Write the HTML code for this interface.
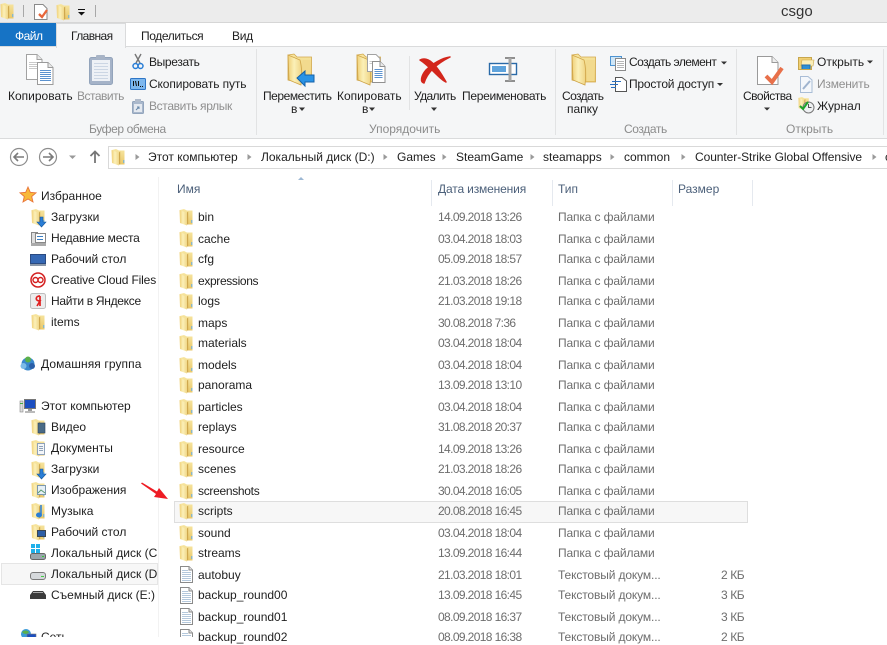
<!DOCTYPE html>
<html><head><meta charset="utf-8"><style>
html,body{margin:0;padding:0}
body{width:887px;height:637px;overflow:hidden;background:#fff;position:relative;font:12px/16px "Liberation Sans","Noto Sans CJK JP",sans-serif;color:#1e1e1e}
div{position:absolute}
.t{white-space:nowrap;height:16px}
.g{color:#8f8f8f}.l{color:#8c8c8c}.d{color:#6d6d6d}.h{color:#4c607a}
.dt{letter-spacing:-.62px}.ty{letter-spacing:-.13px}.sz{letter-spacing:-.4px}
svg{position:absolute;left:0;top:0}
</style></head><body>
<div style="left:0;top:0;width:887px;height:22px;background:#ececec"></div>
<div style="left:0;top:22px;width:887px;height:1px;background:#d6d6d6"></div>
<div style="left:0;top:46px;width:887px;height:1px;background:#dadbdc"></div>
<div style="left:0;top:47px;width:887px;height:91px;background:#f5f6f7"></div>
<div style="left:0;top:138px;width:887px;height:1px;background:#dadbdc"></div>
<div style="left:0;top:23px;width:56px;height:23px;background:#1673c5"></div>
<div style="left:56px;top:23px;width:68px;height:24px;background:#f5f6f7;border:1px solid #dadbdc;border-bottom:0"></div>
<div style="left:256px;top:49px;width:1px;height:86px;background:#e2e3e4"></div>
<div style="left:409px;top:56px;width:1px;height:54px;background:#e2e3e4"></div>
<div style="left:555px;top:49px;width:1px;height:86px;background:#e2e3e4"></div>
<div style="left:736px;top:49px;width:1px;height:86px;background:#e2e3e4"></div>
<div style="left:883px;top:49px;width:1px;height:86px;background:#e2e3e4"></div>
<div style="left:108px;top:146px;width:790px;height:21px;border:1px solid #d9d9d9;background:#fff"></div>
<div style="left:158px;top:177px;width:1px;height:460px;background:#f2f2f2"></div>
<div style="left:431px;top:180px;width:1px;height:26px;background:#e5e9ef"></div>
<div style="left:552px;top:180px;width:1px;height:26px;background:#e5e9ef"></div>
<div style="left:672px;top:180px;width:1px;height:26px;background:#e5e9ef"></div>
<div style="left:752px;top:180px;width:1px;height:26px;background:#e5e9ef"></div>
<div style="left:1px;top:563px;width:155px;height:20px;background:#f7f7f7;border:1px solid #e5e5e5"></div>
<div style="left:174px;top:501px;width:572px;height:20px;background:#f7f7f7;border:1px solid #dedede"></div>

<svg width="887" height="637" viewBox="0 0 887 637">
<defs>
<linearGradient id="a" x1="0" x2="1" y1="0" y2="0"><stop offset="0" stop-color="#f0d078"/><stop offset=".45" stop-color="#fbf0b8"/><stop offset="1" stop-color="#efd484"/></linearGradient>
<linearGradient id="b" x1="0" x2="0" y1="0" y2="1"><stop offset="0" stop-color="#f7e6a2"/><stop offset="1" stop-color="#e9c768"/></linearGradient>
<g id="f"><path d="M1 1 5 0 8 1.500H13.500V15.500H7L1 13.500Z" fill="url(#b)"/><path d="M.5 1 7 3.500C8.500 7 8.500 12 8 16.500L1 14Z" fill="url(#a)"/><path d="M8 3.500 9.200 2.500V15.500H8Z" fill="#cfa84e"/><path d="M12.300 11h1v3h-1z" fill="#62aee6"/></g>
<g id="F"><path d="M1 1 7 0 10 3H24.500V28H10L1 26Z" fill="url(#b)" stroke="#d2a84c" stroke-width=".8"/><path d="M1 1 13 6C15 13 15 24 14 31L2 26Z" fill="url(#a)" stroke="#cfa448" stroke-width=".8"/><path d="M15.500 6H23.500V27H15.500Z" fill="#f2da8e"/></g>
<g id="x"><path d="M.5.5H9L12.500 4V16.500H.5Z" fill="#fff" stroke="#8a8a8a"/><path d="M9 .5V4H12.500" fill="#e4e4e4" stroke="#8a8a8a"/><path d="M2 4.500h6M2 6.500h9M2 8.500h9M2 10.500h9M2 12.500h9M2 14.500h9" stroke="#b4c8dc"/></g>
<g id="dl"><path d="M6 6h3v5h3l-4.500 5L3 11h3z" fill="#2a7ed6" stroke="#16589e" stroke-width=".6"/></g>
<g id="doc"><path d="M.5.5H10L15 5.500V20.500H.5Z" fill="#fff" stroke="#9a9a9a"/><path d="M10 .5V5.500H15" fill="#e9e9e9" stroke="#9a9a9a"/><path d="M3 9.500h10M3 11.500h10M3 13.500h10M3 15.500h10M3 17.500h10" stroke="#5b92cf"/></g>
<g id="doc2"><path d="M.5.5H11L16 5.500V25.500H.5Z" fill="#fff" stroke="#a2a2a2"/><path d="M11 .5V5.500H16" fill="#e9e9e9" stroke="#a2a2a2"/><path d="M3 8.500h8M3 10.500h8M3 12.500h8M3 14.500h8" stroke="#c9c9c9"/></g>
</defs>

<!-- quick access -->
<use href="#f" transform="translate(0,3)"/>
<rect x="23" y="5" width="1" height="12" fill="#a8a8a8"/>
<path d="M34.500 4.500H43L47 8.500V19.500H34.500Z" fill="#fff" stroke="#8a8a8a"/>
<path d="M39 14l3 3 5-7" stroke="#e8663a" stroke-width="2.300" fill="none"/>
<use href="#f" transform="translate(56,4)"/>
<path d="M78 9.500h7" stroke="#111"/><path d="M78 12h7l-3.500 3.500z" fill="#111"/>
<rect x="95" y="5" width="1" height="12" fill="#a8a8a8"/>

<!-- clipboard group -->
<use href="#doc2" transform="translate(26,54)"/>
<g transform="translate(37,62)"><path d="M.5.5H11L16 5.500V22.500H.5Z" fill="#fff" stroke="#9a9a9a"/><path d="M11 .5V5.500H16" fill="#e9e9e9" stroke="#9a9a9a"/><path d="M3 8.500h11M3 10.500h11M3 12.500h11M3 14.500h11M3 16.500h11M3 18.500h11" stroke="#5b92cf"/></g>
<rect x="89.500" y="57.500" width="23" height="27" rx="2" fill="#a5b3c8" stroke="#93a4bb"/>
<rect x="92" y="60" width="18" height="21" fill="#eef1f6"/>
<path d="M94 63.500h14M94 66.500h14M94 69.500h14M94 72.500h14M94 75.500h14M94 78.500h14" stroke="#ccd6e4"/>
<rect x="96" y="55" width="9" height="4" rx="1" fill="#a8b4c6"/>
<path d="M135 54l5 9M141 54l-5 9" stroke="#777" stroke-width="1.400"/>
<circle cx="135.500" cy="66" r="2.500" fill="none" stroke="#2a7ed6" stroke-width="1.500"/><circle cx="140.500" cy="66" r="2.500" fill="none" stroke="#2a7ed6" stroke-width="1.500"/>
<rect x="130.500" y="78.500" width="15" height="11" rx="1" fill="#7db7ee" stroke="#2f76c6"/>
<path d="M133.500 81v5M135.500 81l1 5M138.500 81v5" stroke="#111"/><path d="M140 86.500h1M142 86.500h1" stroke="#111"/>
<rect x="132.500" y="101.500" width="11" height="12" rx="1" fill="#a9b8cc" stroke="#93a5bd"/>
<rect x="134" y="104" width="8" height="8" fill="#e4e9f0"/>
<rect x="135" y="99" width="6" height="3" fill="#b0bbcb"/>
<path d="M136 110l3-3m-2 0h2v2" stroke="#6688aa" fill="none"/>

<!-- organize group -->
<use href="#F" transform="translate(287,54)"/>
<path d="M297 78l8-7v4h9v7h-9v4z" fill="#2a93e6" stroke="#1562a8"/>
<use href="#F" transform="translate(356,54)"/>
<g transform="translate(367,54)"><path d="M.5.5H9L13 4.500V17.500H.5Z" fill="#fff" stroke="#a2a2a2"/><path d="M2.500 7.500h8M2.500 9.500h8" stroke="#ccc"/></g>
<g transform="translate(372,61)"><path d="M.5.5H8L13 5.500V21.500H.5Z" fill="#fff" stroke="#909090"/><path d="M8 .5V5.500H13" fill="#e9e9e9" stroke="#909090"/><path d="M2.500 8.500h8M2.500 10.500h8M2.500 12.500h8M2.500 14.500h8M2.500 16.500h8" stroke="#5b92cf"/></g>
<path d="M420 60C428 56 436 64 446 82 440 80 430 66 420 60Z" fill="#d3261c" stroke="#d3261c" stroke-width="1.500" stroke-linejoin="round"/>
<path d="M450 57C440 62 428 70 424 83 420 82 421 76 426 70 432 64 442 58 450 57Z" fill="#d3261c" stroke="#d3261c" stroke-width="1.500" stroke-linejoin="round"/>
<rect x="489.500" y="63.500" width="27" height="11" fill="#fff" stroke="#2a6aa8" stroke-width="1.400"/>
<rect x="492" y="66" width="14" height="6" fill="#5ea3dc"/>
<path d="M505 58h10M505 81h10" stroke="#8f8f8f" stroke-width="2"/><path d="M510 58v23" stroke="#a5a5a5" stroke-width="3"/>

<!-- arrows -->
<path d="M299 107.500h6l-3 3.500zM369 107.500h6l-3 3.500zM431 107.500h6l-3 3.500zM721 61.500h6l-3 3zM717 83h6l-3 3zM764 107.500h6l-3 3zM867 60.500h6l-3 3z" fill="#333"/>

<!-- new group -->
<use href="#F" transform="translate(571,54)"/>
<rect x="610.500" y="56.500" width="11" height="9" fill="#cfe6f7" stroke="#4d93d1"/>
<path d="M615.500 58.500H625.500V70.500H615.500Z" fill="#fff" stroke="#8a8a8a"/><path d="M617 61.500h7M617 63.500h7M617 65.500h7M617 67.500h7" stroke="#b6b6b6"/>
<path d="M615.500 77.500H622L626.500 81V91.500H615.500Z" fill="#fff" stroke="#555"/>
<path d="M610 84.500h8M612 81.500h9M611 87.500h5" stroke="#2a6fc0"/>

<!-- open group -->
<path d="M757.500 56.500H772L778 62.500V84.500H757.500Z" fill="#fff" stroke="#9a9a9a"/><path d="M772 56.500V62.500H778" fill="#eee" stroke="#9a9a9a"/>
<path d="M766 76l6 6 10-14" stroke="#e8704a" stroke-width="4" fill="none"/>
<path d="M798.500 57.500H811.500V69.500H798.500Z" fill="#f0cf72" stroke="#c7a64d"/>
<path d="M802 60H814L813 66H801Z" fill="#fbeeb8" stroke="#c7a64d" stroke-width=".6"/>
<path d="M802 69v-4h8v4" fill="#2e8fd6" stroke="#1f6fb0"/>
<path d="M800.500 76.500H808L812 80V92.500H800.500Z" fill="#f4f7fb" stroke="#a9bdd6"/>
<path d="M803 89l7-8" stroke="#9fb4cf" stroke-width="2"/>
<use href="#f" transform="translate(798,97) scale(.8)"/>
<circle cx="808.500" cy="107.500" r="5.500" fill="#eef0f2" stroke="#777"/>
<path d="M808.500 104v3.500h3" stroke="#555" fill="none"/>
<path d="M800 106l3 3 5-7" stroke="#1ea32a" stroke-width="2" fill="none"/>

<!-- nav buttons -->
<circle cx="19" cy="157" r="8.500" fill="#fff" stroke="#8d8d8d" stroke-width="1.200"/>
<path d="M24 157H14.500M18 153l-4 4 4 4" stroke="#7a7a7a" stroke-width="1.600" fill="none"/>
<circle cx="48" cy="157" r="8.500" fill="#fff" stroke="#8d8d8d" stroke-width="1.200"/>
<path d="M43 157H52.500M49 153l4 4-4 4" stroke="#7a7a7a" stroke-width="1.600" fill="none"/>
<path d="M69 155.500h7l-3.500 3.500z" fill="#999"/>
<path d="M95 163V152M90.500 156l4.500-4.500 4.500 4.500" stroke="#777" stroke-width="1.800" fill="none"/>
<use href="#f" transform="translate(111,149)"/>
<path d="M135.500 154l4 3-4 3zM383.500 154l4 3-4 3zM442.500 154l4 3-4 3zM530.500 154l4 3-4 3zM610.500 154l4 3-4 3zM681.500 154l4 3-4 3zM872.500 154l4 3-4 3zM247.500 154l4 3-4 3z" fill="#9a9a9a"/>
<path d="M298 180l3-3 3 3z" fill="#9db8d4"/>

<!-- nav tree -->
<path d="M28 187l2.300 5.300 5.700.5-4.300 3.700 1.300 5.500-5-3-5 3 1.300-5.500-4.300-3.700 5.700-.5z" fill="#f8b93a" stroke="#e8743a" stroke-width=".9"/>
<use href="#f" transform="translate(31,209)"/><use href="#dl" transform="translate(34,211)"/>
<g transform="translate(31,231)"><rect x=".5" y="1.500" width="6" height="11" fill="#dedede" stroke="#888"/><rect x="4.500" y="2.500" width="10" height="9" fill="#fff" stroke="#888"/><path d="M6 5.500h6M6 8.500h6" stroke="#3a7fc4"/><rect x="0" y="12" width="15" height="3" fill="#aaa"/></g>
<rect x="30.500" y="254.500" width="15" height="9" fill="#3568b4" stroke="#2a4a80"/><rect x="30" y="264" width="16" height="2" fill="#8a97a8"/>
<g transform="translate(30,272)" fill="none" stroke="#d42020"><circle cx="8" cy="8" r="7" stroke-width="1.500"/><circle cx="5.500" cy="8" r="2.500" stroke-width="1.400"/><circle cx="10.500" cy="8" r="2.500" stroke-width="1.400"/></g>
<rect x="30.500" y="293.500" width="15" height="15" rx="2" fill="#ececec" stroke="#bdbdbd"/>
<path d="M40 296v10M40 296c-5 0-5 5 0 5l-3 5" stroke="#e02020" stroke-width="1.700" fill="none"/>
<use href="#f" transform="translate(31,314)"/>
<g transform="translate(20,356)"><circle cx="8" cy="8" r="6.500" fill="#3a88cc"/><circle cx="8" cy="3.500" r="3" fill="#5bb04a"/><circle cx="3.500" cy="10" r="3" fill="#7cbbe8"/><circle cx="12" cy="10" r="3" fill="#2a5fa8"/></g>
<g transform="translate(20,398)"><rect x="0" y="3" width="3" height="11" fill="#ddd" stroke="#888" stroke-width=".6"/><path d="M0 5.500h3" stroke="#4a4"/><rect x="4.500" y="1.500" width="11" height="9" fill="#1c4fc0" stroke="#777"/><rect x="8" y="11" width="4" height="2" fill="#999"/><rect x="5" y="13" width="10" height="2" fill="#bbb"/></g>
<use href="#f" transform="translate(31,419)"/><rect x="38" y="423" width="7" height="10" fill="#4a6a85" stroke="#2d4459" stroke-width=".6"/>
<use href="#f" transform="translate(31,440)"/><rect x="37.500" y="443.500" width="7" height="11" fill="#f4f6f9" stroke="#8fa2b8"/><path d="M39 446.500h4M39 448.500h4M39 450.500h4" stroke="#8fa2b8"/>
<use href="#f" transform="translate(31,461)"/><use href="#dl" transform="translate(34,463)"/>
<use href="#f" transform="translate(31,482)"/><rect x="37.500" y="485.500" width="8" height="9" fill="#e6f0f7" stroke="#7d98ad"/><path d="M38 493l3-3 4 3" stroke="#5a9a70" fill="none"/>
<use href="#f" transform="translate(31,503)"/><path d="M41 505v9" stroke="#2a7ed6" stroke-width="1.500"/><ellipse cx="39" cy="515" rx="3" ry="2.500" fill="#2a7ed6"/>
<use href="#f" transform="translate(31,524)"/><rect x="37.500" y="530.500" width="8" height="6" fill="#2d5fa6" stroke="#3c4650"/>
<rect x="31" y="544" width="4" height="4" fill="#1fb0ea"/><rect x="36" y="544" width="4" height="4" fill="#1fb0ea"/><rect x="31" y="549" width="4" height="4" fill="#1fb0ea"/><rect x="36" y="549" width="4" height="4" fill="#1fb0ea"/>
<rect x="30.500" y="553.500" width="15" height="6" rx="2" fill="#9aa5ab" stroke="#666"/><path d="M42 556.500h2" stroke="#3c3"/>
<rect x="30.500" y="572.500" width="15" height="7" rx="2.500" fill="#d6d9dc" stroke="#7a7a7a"/><path d="M41 576.500h3" stroke="#4c4"/>
<path d="M33 591h10l3 4v4H30v-4z" fill="#3c3c3c"/><path d="M33 592.500h10" stroke="#aaa"/>
<g transform="translate(20,628)"><circle cx="6" cy="6" r="5" fill="#3a9ad8"/><path d="M2 4c2-2 5-2 7 0-1 2-5 3-7 0z" fill="#5cb04a"/><rect x="7" y="6" width="9" height="7" fill="#1c4fc0" stroke="#777" stroke-width=".6"/></g>

<!-- files -->
<use href="#f" transform="translate(179,209)"/><use href="#f" transform="translate(179,231)"/><use href="#f" transform="translate(179,251)"/><use href="#f" transform="translate(179,273)"/><use href="#f" transform="translate(179,293)"/><use href="#f" transform="translate(179,315)"/><use href="#f" transform="translate(179,335)"/><use href="#f" transform="translate(179,357)"/><use href="#f" transform="translate(179,377)"/><use href="#f" transform="translate(179,399)"/><use href="#f" transform="translate(179,419)"/><use href="#f" transform="translate(179,441)"/><use href="#f" transform="translate(179,461)"/><use href="#f" transform="translate(179,483)"/><use href="#f" transform="translate(179,503)"/><use href="#f" transform="translate(179,525)"/><use href="#f" transform="translate(179,545)"/>
<use href="#x" transform="translate(180,566)"/><use href="#x" transform="translate(180,587)"/><use href="#x" transform="translate(180,608)"/><use href="#x" transform="translate(180,629)"/>
<path d="M141 483.500 142 482.500 157 491.500 159 488 168 499 154 497 156 494Z" fill="#ee1c24"/>
</svg>

<div class="t" style="left:781px;top:4px;font-size:15px;color:#333">csgo</div>
<div class="t" style="left:15px;top:28px;color:#fff;letter-spacing:-.5px">Файл</div>
<div class="t" style="left:71px;top:28px;letter-spacing:-.6px">Главная</div>
<div class="t" style="left:141px;top:28px;letter-spacing:-.4px">Поделиться</div>
<div class="t" style="left:232px;top:28px;letter-spacing:-.3px">Вид</div>

<div class="t" style="left:8px;top:88px">Копировать</div>
<div class="t g" style="left:77px;top:88px;letter-spacing:-.5px">Вставить</div>
<div class="t" style="left:149px;top:54px;letter-spacing:-.35px">Вырезать</div>
<div class="t" style="left:149px;top:76px;letter-spacing:-.12px">Скопировать путь</div>
<div class="t g" style="left:149px;top:98px;letter-spacing:-.35px">Вставить ярлык</div>
<div class="t l" style="left:89px;top:121px;letter-spacing:-.4px">Буфер обмена</div>

<div class="t" style="left:263px;top:88px;letter-spacing:-.45px">Переместить</div>
<div class="t" style="left:291px;top:101px">в</div>
<div class="t" style="left:337px;top:88px">Копировать</div>
<div class="t" style="left:362px;top:101px">в</div>
<div class="t" style="left:414px;top:88px;letter-spacing:-.6px">Удалить</div>
<div class="t" style="left:462px;top:88px;letter-spacing:-.3px">Переименовать</div>
<div class="t l" style="left:369px;top:121px">Упорядочить</div>

<div class="t" style="left:562px;top:88px;letter-spacing:-.6px">Создать</div>
<div class="t" style="left:567px;top:101px">папку</div>
<div class="t" style="left:629px;top:54px;letter-spacing:-.55px">Создать элемент</div>
<div class="t" style="left:629px;top:76px;letter-spacing:-.2px">Простой доступ</div>
<div class="t l" style="left:624px;top:121px;letter-spacing:-.4px">Создать</div>

<div class="t" style="left:743px;top:88px;letter-spacing:-.5px">Свойства</div>
<div class="t" style="left:817px;top:54px">Открыть</div>
<div class="t g" style="left:817px;top:76px;letter-spacing:-.2px">Изменить</div>
<div class="t" style="left:817px;top:98px">Журнал</div>
<div class="t l" style="left:786px;top:121px">Открыть</div>

<div class="t" style="left:148px;top:149px">Этот компьютер</div>
<div class="t" style="left:261px;top:149px">Локальный диск (D:)</div>
<div class="t" style="left:397px;top:149px">Games</div>
<div class="t" style="left:456px;top:149px">SteamGame</div>
<div class="t" style="left:543px;top:149px">steamapps</div>
<div class="t" style="left:624px;top:149px">common</div>
<div class="t" style="left:695px;top:149px;letter-spacing:-.07px">Counter-Strike Global Offensive</div>
<div class="t" style="left:885px;top:149px">c</div>

<div class="t h" style="left:177px;top:181px">Имя</div>
<div class="t h" style="left:438px;top:181px;letter-spacing:-.15px">Дата изменения</div>
<div class="t h" style="left:558px;top:181px">Тип</div>
<div class="t h" style="left:678px;top:181px">Размер</div>

<div style="left:0;top:0;width:157px;height:637px;overflow:hidden">
<div class="t" style="left:41px;top:188px">Избранное</div>
<div class="t" style="left:51px;top:209px">Загрузки</div>
<div class="t" style="left:51px;top:230px;letter-spacing:-.2px">Недавние места</div>
<div class="t" style="left:51px;top:251px">Рабочий стол</div>
<div class="t" style="left:51px;top:272px;letter-spacing:-.15px">Creative Cloud Files</div>
<div class="t" style="left:51px;top:293px;letter-spacing:-.3px">Найти в Яндексе</div>
<div class="t" style="left:51px;top:314px">items</div>
<div class="t" style="left:41px;top:356px;letter-spacing:.1px">Домашняя группа</div>
<div class="t" style="left:41px;top:398px">Этот компьютер</div>
<div class="t" style="left:51px;top:419px">Видео</div>
<div class="t" style="left:51px;top:440px">Документы</div>
<div class="t" style="left:51px;top:461px">Загрузки</div>
<div class="t" style="left:51px;top:482px">Изображения</div>
<div class="t" style="left:51px;top:503px">Музыка</div>
<div class="t" style="left:51px;top:524px">Рабочий стол</div>
<div class="t" style="left:51px;top:545px">Локальный диск (C:)</div>
<div class="t" style="left:51px;top:566px">Локальный диск (D:)</div>
<div class="t" style="left:51px;top:587px">Съемный диск (E:)</div>
<div class="t" style="left:41px;top:629px">Сеть</div>
</div>

<div class="t" style="left:198px;top:209px">bin</div><div class="t d dt" style="left:438px;top:209px">14.09.2018 13:26</div><div class="t d ty" style="left:558px;top:209px">Папка с файлами</div>
<div class="t" style="left:198px;top:231px">cache</div><div class="t d dt" style="left:438px;top:231px">03.04.2018 18:03</div><div class="t d ty" style="left:558px;top:231px">Папка с файлами</div>
<div class="t" style="left:198px;top:251px">cfg</div><div class="t d dt" style="left:438px;top:251px">05.09.2018 18:57</div><div class="t d ty" style="left:558px;top:251px">Папка с файлами</div>
<div class="t" style="left:198px;top:273px;letter-spacing:-.35px">expressions</div><div class="t d dt" style="left:438px;top:273px">21.03.2018 18:26</div><div class="t d ty" style="left:558px;top:273px">Папка с файлами</div>
<div class="t" style="left:198px;top:293px">logs</div><div class="t d dt" style="left:438px;top:293px">21.03.2018 19:18</div><div class="t d ty" style="left:558px;top:293px">Папка с файлами</div>
<div class="t" style="left:198px;top:315px">maps</div><div class="t d dt" style="left:438px;top:315px">30.08.2018 7:36</div><div class="t d ty" style="left:558px;top:315px">Папка с файлами</div>
<div class="t" style="left:198px;top:335px">materials</div><div class="t d dt" style="left:438px;top:335px">03.04.2018 18:04</div><div class="t d ty" style="left:558px;top:335px">Папка с файлами</div>
<div class="t" style="left:198px;top:357px">models</div><div class="t d dt" style="left:438px;top:357px">03.04.2018 18:04</div><div class="t d ty" style="left:558px;top:357px">Папка с файлами</div>
<div class="t" style="left:198px;top:377px">panorama</div><div class="t d dt" style="left:438px;top:377px">13.09.2018 13:10</div><div class="t d ty" style="left:558px;top:377px">Папка с файлами</div>
<div class="t" style="left:198px;top:399px">particles</div><div class="t d dt" style="left:438px;top:399px">03.04.2018 18:04</div><div class="t d ty" style="left:558px;top:399px">Папка с файлами</div>
<div class="t" style="left:198px;top:419px">replays</div><div class="t d dt" style="left:438px;top:419px">31.08.2018 20:37</div><div class="t d ty" style="left:558px;top:419px">Папка с файлами</div>
<div class="t" style="left:198px;top:441px">resource</div><div class="t d dt" style="left:438px;top:441px">14.09.2018 13:26</div><div class="t d ty" style="left:558px;top:441px">Папка с файлами</div>
<div class="t" style="left:198px;top:461px">scenes</div><div class="t d dt" style="left:438px;top:461px">21.03.2018 18:26</div><div class="t d ty" style="left:558px;top:461px">Папка с файлами</div>
<div class="t" style="left:198px;top:483px;letter-spacing:-.3px">screenshots</div><div class="t d dt" style="left:438px;top:483px">30.04.2018 16:05</div><div class="t d ty" style="left:558px;top:483px">Папка с файлами</div>
<div class="t" style="left:198px;top:503px">scripts</div><div class="t d dt" style="left:438px;top:503px">20.08.2018 16:45</div><div class="t d ty" style="left:558px;top:503px">Папка с файлами</div>
<div class="t" style="left:198px;top:525px">sound</div><div class="t d dt" style="left:438px;top:525px">03.04.2018 18:04</div><div class="t d ty" style="left:558px;top:525px">Папка с файлами</div>
<div class="t" style="left:198px;top:545px">streams</div><div class="t d dt" style="left:438px;top:545px">13.09.2018 16:44</div><div class="t d ty" style="left:558px;top:545px">Папка с файлами</div>
<div class="t" style="left:198px;top:567px">autobuy</div><div class="t d dt" style="left:438px;top:567px">21.03.2018 18:01</div><div class="t d ty" style="left:558px;top:567px">Текстовый докум...</div><div class="t d sz" style="left:721px;top:567px">2 КБ</div>
<div class="t" style="left:198px;top:587px">backup_round00</div><div class="t d dt" style="left:438px;top:587px">13.09.2018 16:45</div><div class="t d ty" style="left:558px;top:587px">Текстовый докум...</div><div class="t d sz" style="left:721px;top:587px">3 КБ</div>
<div class="t" style="left:198px;top:609px">backup_round01</div><div class="t d dt" style="left:438px;top:609px">08.09.2018 16:37</div><div class="t d ty" style="left:558px;top:609px">Текстовый докум...</div><div class="t d sz" style="left:721px;top:609px">3 КБ</div>
<div class="t" style="left:198px;top:629px">backup_round02</div><div class="t d dt" style="left:438px;top:629px">08.09.2018 16:38</div><div class="t d ty" style="left:558px;top:629px">Текстовый докум...</div><div class="t d sz" style="left:721px;top:629px">2 КБ</div>
</body></html>
